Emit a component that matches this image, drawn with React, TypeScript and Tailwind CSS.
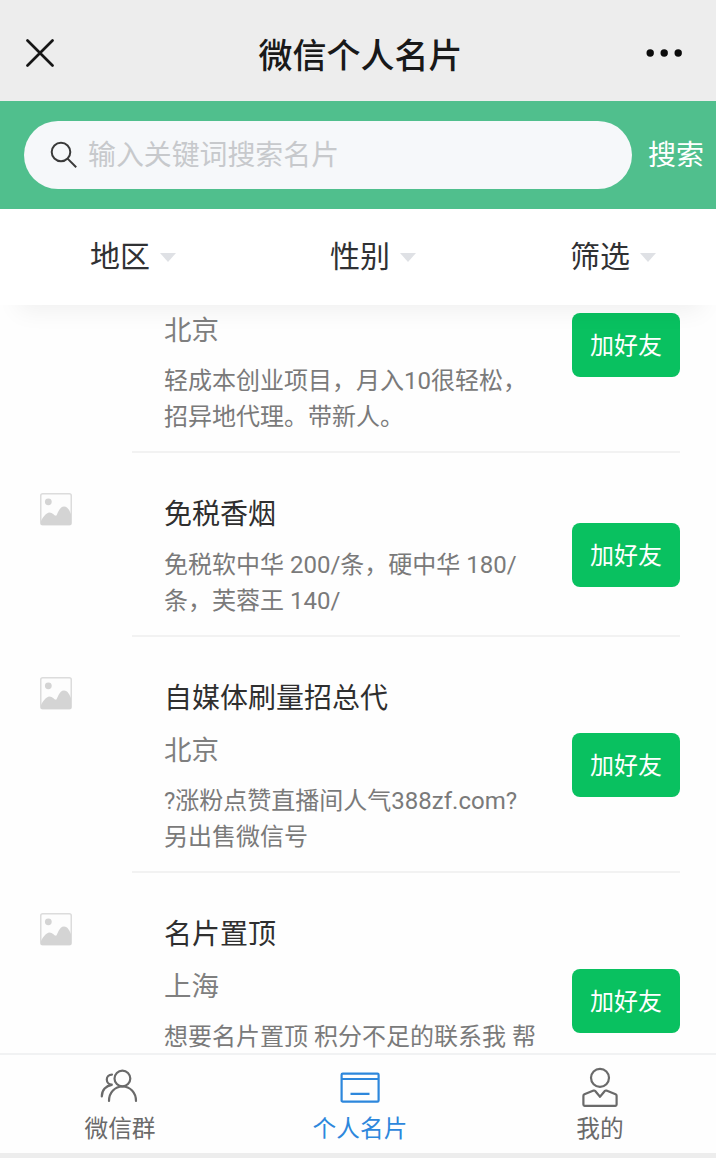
import React, { useState } from 'react';

type Card = { title: string; city?: string; lines: string[] };

const filters = ['地区', '性别', '筛选'];

const cards: Card[] = [
  { title: '',               city: '北京', lines: ['轻成本创业项目，月入10很轻松，', '招异地代理。带新人。'] },
  { title: '免税香烟',                     lines: ['免税软中华 200/条，硬中华 180/', '条，芙蓉王 140/'] },
  { title: '自媒体刷量招总代', city: '北京', lines: ['?涨粉点赞直播间人气388zf.com?', '另出售微信号'] },
  { title: '名片置顶',       city: '上海', lines: ['想要名片置顶 积分不足的联系我 帮'] },
];

function GroupIcon() {
  return (
    <svg width="40" height="40" viewBox="0 0 40 40" fill="none" stroke="currentColor" strokeWidth="2.2" strokeLinecap="round">
      <circle cx="22.4" cy="11.5" r="7.9" />
      <path d="M9 34C9 25.5 15 19.5 22.5 19.5S36 25.5 36 34" />
      <path d="M12 7.6C8.8 7.6 6.8 9.8 6.8 12.4c0 2.8 2 5 5 5.2M11.8 17.8C6 18.6 1.8 23.2 1.8 29.4" />
    </svg>
  );
}

function CardIcon() {
  return (
    <svg width="40" height="40" viewBox="0 0 40 40" fill="none" stroke="currentColor" strokeWidth="2.2">
      <rect x="1.6" y="6.6" width="37" height="28" rx="1.2" />
      <path d="M1.6 12H38.6M10.5 26.8H29.5" />
    </svg>
  );
}

function UserIcon() {
  return (
    <svg width="40" height="40" viewBox="0 0 40 40" fill="none" stroke="currentColor" strokeWidth="2.2" strokeLinejoin="round">
      <circle cx="20" cy="10.8" r="9" />
      <path d="M4.6 38.8H35.4Q36.6 38.8 36.6 37.6V28.8Q36.6 27.8 35.6 27.3L26.4 23.6Q25.4 23.3 24.8 24L20 29.8L15.2 24Q14.6 23.3 13.6 23.6L4.4 27.3Q3.4 27.8 3.4 28.8V37.6Q3.4 38.8 4.6 38.8Z" />
    </svg>
  );
}

const tabs: { label: string; icon: React.ElementType }[] = [
  { label: '微信群',   icon: GroupIcon },
  { label: '个人名片', icon: CardIcon  },
  { label: '我的',     icon: UserIcon  },
];

function Placeholder() {
  return (
    <svg className="mt-[2px] self-start shrink-0" width="32" height="33" viewBox="0 0 32 33">
      <rect x="0.75" y="0.75" width="30.5" height="31" rx="2" fill="#fdfdfd" stroke="#dcdcdc" strokeWidth="1.5" />
      <circle cx="8.3" cy="8.8" r="3.4" fill="#d4d4d4" />
      <path d="M1 32V28C3 24 6 20 9.5 19.5C12.5 19.5 14 22.5 16 22.8C17.5 22 19 13.5 24 13.5C28 13.5 29.5 18 31 21V32Z" fill="#d4d4d4" />
    </svg>
  );
}

function CardRow({ title, city, lines }: Card) {
  return (
    <div className="flex pl-10 pr-10">
      <div className="w-[92px] shrink-0 flex pt-[38px]">
        <Placeholder />
      </div>
      <div className="flex-1 flex items-center pl-8 pt-[38px] pb-4 border-b-2 border-[#f2f2f2]">
        <div className="flex-1 whitespace-nowrap">
          <div className="h-[44px] text-[28px] leading-[48px] text-[#2f2f2f]">{title}</div>
          {city && <div className="mt-2 h-[44px] text-[27.5px] leading-[48px] text-[#7f7f7f]">{city}</div>}
          <div className="mt-3 h-[72px] text-2xl leading-9 text-[#7a7a7a]">
            {lines.map((line) => (
              <p key={line}>{line}</p>
            ))}
          </div>
        </div>
        <button className="w-[108px] h-16 pt-[2px] shrink-0 rounded-lg bg-[#09c160] text-2xl text-white">加好友</button>
      </div>
    </div>
  );
}

export default function App() {
  const [active, setActive] = useState(1);

  return (
    <div className="w-full h-[1158px] overflow-hidden bg-[#ededed] font-[Roboto,'Noto_Sans_CJK_SC',sans-serif]">
      <div className="w-[720px] h-full flex flex-col">
        {/* Title bar */}
        <header className="h-[101px] shrink-0 flex items-center justify-between pl-[26px] pr-[37px] pt-[5px]">
          <svg width="28" height="28" viewBox="0 0 28 28" stroke="#161616" strokeWidth="2.7" strokeLinecap="round">
            <path d="M1.5 1.5L26.5 26.5M26.5 1.5L1.5 26.5" />
          </svg>
          <h1 className="pl-[21px] pt-[5px] text-[34px] leading-[44px] font-medium text-[#191919]">微信个人名片</h1>
          <svg width="37" height="8" viewBox="0 0 37 8" fill="#0c0c0c">
            <circle cx="4.2" cy="4" r="3.7" />
            <circle cx="18.2" cy="4" r="3.7" />
            <circle cx="32.2" cy="4" r="3.7" />
          </svg>
        </header>

        {/* Search */}
        <div className="h-[108px] shrink-0 flex items-center pl-6 bg-[#50bf8d]">
          <div className="w-[608px] h-[68px] flex items-center rounded-full bg-[#f6f8fa] pl-[26px]">
            <svg width="28" height="28" viewBox="0 0 28 28" fill="none" stroke="#3a3a3a" strokeWidth="2">
              <circle cx="11" cy="11" r="9.3" />
              <path d="M17.6 17.6L26.2 26.2" />
            </svg>
            <span className="pl-[10px] pt-[1px] text-[27.9px] leading-10 text-[#c7c9cc]">输入关键词搜索名片</span>
          </div>
          <button className="pl-4 pt-[1px] text-[28px] leading-10 text-white">搜索</button>
        </div>

        {/* Filters */}
        <div className="relative z-10 h-24 shrink-0 grid grid-cols-3 bg-white shadow-[0_24px_24px_-18px_rgba(0,0,0,0.06)]">
          {filters.map((f) => (
            <button key={f} className="flex items-center justify-center gap-[10px] pl-[26px] text-[30px] text-[#303133]">
              <span className="leading-[44px]">{f}</span>
              <svg width="16" height="9" viewBox="0 0 16 9" fill="#dfe1e5">
                <path d="M0 0H16L8 9Z" />
              </svg>
            </button>
          ))}
        </div>

        {/* List, scrolled down past the first card's title */}
        <main className="flex-1 min-h-0 overflow-hidden bg-[#fefefe]">
          <div className="-mt-[88px]">
            {cards.map((c, i) => (
              <CardRow key={i} {...c} />
            ))}
          </div>
        </main>

        {/* Tab bar */}
        <nav className="h-[100px] mb-[5px] shrink-0 grid grid-cols-3 border-t-2 border-[#f1f2f3] bg-[#fefefe]">
          {tabs.map(({ label, icon: Icon }, i) => (
            <button
              key={label}
              onClick={() => setActive(i)}
              className={`flex flex-col items-center pt-3 ${active === i ? 'text-[#2d87dc]' : 'text-[#6a6a6a]'}`}
            >
              <Icon />
              <span className="mt-1 text-[23.7px] leading-9">{label}</span>
            </button>
          ))}
        </nav>
      </div>
    </div>
  );
}
